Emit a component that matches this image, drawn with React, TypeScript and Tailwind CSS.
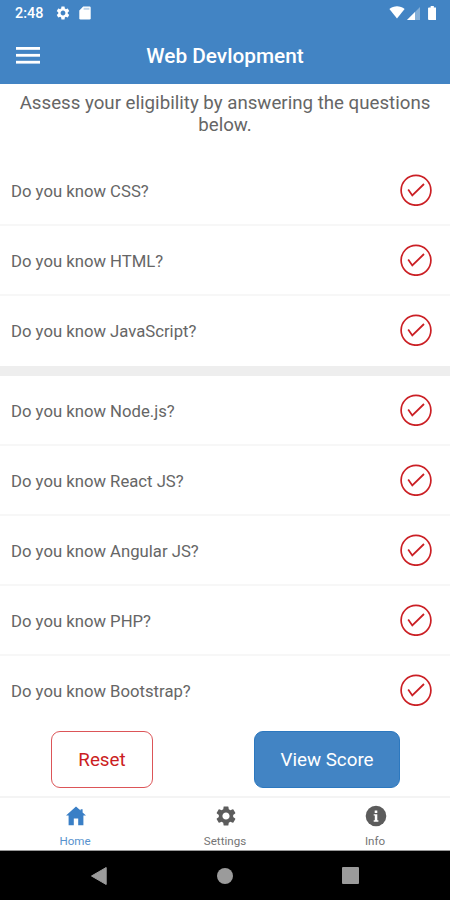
import React from 'react';
import { MdSettings } from 'react-icons/md';

interface QuestionRowProps {
  topic: string;
  last?: boolean;
}

interface IconProps {
  className?: string;
}

const basicTopics = ['CSS', 'HTML', 'JavaScript'];
const advancedTopics = ['Node.js', 'React JS', 'Angular JS', 'PHP', 'Bootstrap'];

const HomeIcon = ({ className }: IconProps) => (
  <svg className={className} viewBox="0 0 24 24" fill="currentColor">
    <path d="M12 2.6 L16.6 6.6 V5.2 H18.6 V8.4 L22 11.6 H19.4 V21.2 H14.2 V14.6 H9.8 V21.2 H4.6 V11.6 H2 Z" />
  </svg>
);

const InfoIcon = ({ className }: IconProps) => (
  <svg className={className} viewBox="0 0 24 24">
    <circle cx="12" cy="12" r="10.3" fill="currentColor" />
    <path d="M10.7 6.4 H13.3 V8.9 H10.7 Z M9.7 10.2 H13.3 V16.3 H14.4 V17.7 H9.7 V16.3 H10.8 V11.6 H9.7 Z" fill="#ffffff" />
  </svg>
);

const QuestionRow = ({ topic, last }: QuestionRowProps) => (
  <li
    className={`flex h-[70.2px] items-center justify-between pr-[18px] pl-[11px] border-b-2 ${
      last ? 'border-transparent' : 'border-[#f7f7f7]'
    }`}
  >
    <span className="pt-[4px] text-[16.7px] leading-5 text-[#666666]">Do you know {topic}?</span>
    <svg className="h-8 w-8" viewBox="0 0 32 32" fill="none" stroke="#cb2025">
      <circle cx="16" cy="16.3" r="14.9" strokeWidth="1.7" />
      <path d="M8.2 15.6 L12.3 21.4 L24 10" strokeWidth="1.8" />
    </svg>
  </li>
);

const StatusBar = () => (
  <div className="flex h-[27px] items-center pr-[14px] pl-[15px] text-white">
    <span className="w-[29px] text-[14.4px] font-medium leading-4">2:48</span>
    <MdSettings className="ml-[11px] -mt-px h-4 w-4" />
    <svg className="ml-[8px] -mt-px h-[14px] w-[12px]" viewBox="0 0 12 14" fill="currentColor">
      <path d="M4.2 0.5 H10.5 Q11.7 0.5 11.7 1.7 V12.3 Q11.7 13.5 10.5 13.5 H1.5 Q0.3 13.5 0.3 12.3 V4.5 Z" />
      <path d="M4.6 1.8 H10.4 V3.8 H4.6 Z" fill="#4284c4" opacity="0.35" />
    </svg>
    <svg className="ml-auto -mt-[2px] h-[13px] w-[16px]" viewBox="0 0 17 14" fill="currentColor">
      <path d="M0.3 3.2 C5 -0.6 12 -0.6 16.7 3.2 L8.5 13.5 Z" />
    </svg>
    <svg className="ml-[2px] h-[13px] w-[13px]" viewBox="0 0 13 13" fill="currentColor">
      <path d="M0 13 L13 0 V13 Z" opacity="0.35" />
      <path d="M0 13 L8 5 V13 Z" />
    </svg>
    <svg className="ml-[8px] -mt-px h-[14px] w-[8.5px]" viewBox="0 0 9 15" fill="currentColor">
      <path d="M2.8 0 H6.2 V1.5 H8 Q9 1.5 9 2.5 V14 Q9 15 8 15 H1 Q0 15 0 14 V2.5 Q0 1.5 1 1.5 H2.8 Z" />
    </svg>
  </div>
);

const tabs = [
  { label: 'Home', icon: HomeIcon, active: true },
  { label: 'Settings', icon: MdSettings, active: false },
  { label: 'Info', icon: InfoIcon, active: false },
];

const App = () => {
  return (
    <div className="flex h-[900px] w-[450px] flex-col overflow-hidden bg-white font-[Roboto,sans-serif]">
      <header className="h-[83.5px] shrink-0 bg-[#4284c4]">
        <StatusBar />
        <div className="grid h-[56px] grid-cols-[1fr_auto_1fr] items-center">
          <svg className="ml-4 h-[17px] w-6" viewBox="0 0 24 17" fill="#ffffff" aria-label="Menu">
            <rect y="0" width="24" height="2.8" />
            <rect y="6.9" width="24" height="2.8" />
            <rect y="13.8" width="24" height="2.8" />
          </svg>
          <h1 className="pt-[3px] text-[20.8px] font-medium text-white">Web Devlopment</h1>
        </div>
      </header>

      <main className="flex min-h-0 flex-1 flex-col">
        <p className="h-[72px] shrink-0 px-3 pt-[8px] text-center text-[18.7px] leading-[22px] text-[#666666]">
          Assess your eligibility by answering the questions below.
        </p>
        <ul className="shrink-0">
          {basicTopics.map((topic, i) => (
            <QuestionRow key={topic} topic={topic} last={i === basicTopics.length - 1} />
          ))}
        </ul>
        <div className="h-[9.5px] shrink-0 bg-[#eeeeee]" />
        <ul className="min-h-0 flex-1 overflow-hidden">
          {advancedTopics.map((topic, i) => (
            <QuestionRow key={topic} topic={topic} last={i === advancedTopics.length - 1} />
          ))}
        </ul>
      </main>

      <div className="flex h-[65px] shrink-0 items-start justify-between pr-[50px] pl-[51px]">
        <button className="h-[57px] w-[102px] rounded-[9px] border border-[#dc5558] pt-[2px] text-[18.8px] text-[#cb1d22]">
          Reset
        </button>
        <button className="h-[57px] w-[146px] rounded-[9px] border border-[#2c78bf] bg-[#4284c4] pt-[2px] text-[18.8px] text-white">
          View Score
        </button>
      </div>

      <nav className="grid h-[55px] shrink-0 grid-cols-3 border-t-2 border-b border-t-[#f4f4f4] border-b-[#999999]">
        {tabs.map(({ label, icon: Icon, active }) => (
          <div
            key={label}
            className={`flex flex-col items-center pt-[6px] ${active ? 'text-[#3a7fc6]' : 'text-[#5c5c5c]'}`}
          >
            <Icon className="ml-px h-6 w-6" />
            <span className="mt-[6px] text-[11.6px] leading-[14px] opacity-85">{label}</span>
          </div>
        ))}
      </nav>

      <div className="grid h-[49px] shrink-0 grid-cols-[200px_50px_200px] items-center bg-black">
        <svg className="ml-[91px] h-[18px] w-4" viewBox="0 0 16 18" fill="#9b9b9b">
          <path d="M15.2 0.5 V17.5 L0.5 9 Z" stroke="#9b9b9b" strokeLinejoin="round" />
        </svg>
        <span className="h-4 w-4 justify-self-center rounded-full bg-[#9b9b9b]" />
        <span className="ml-[92px] h-[17px] w-[17px] rounded-[1px] bg-[#9b9b9b]" />
      </div>
    </div>
  );
};

export default App;
